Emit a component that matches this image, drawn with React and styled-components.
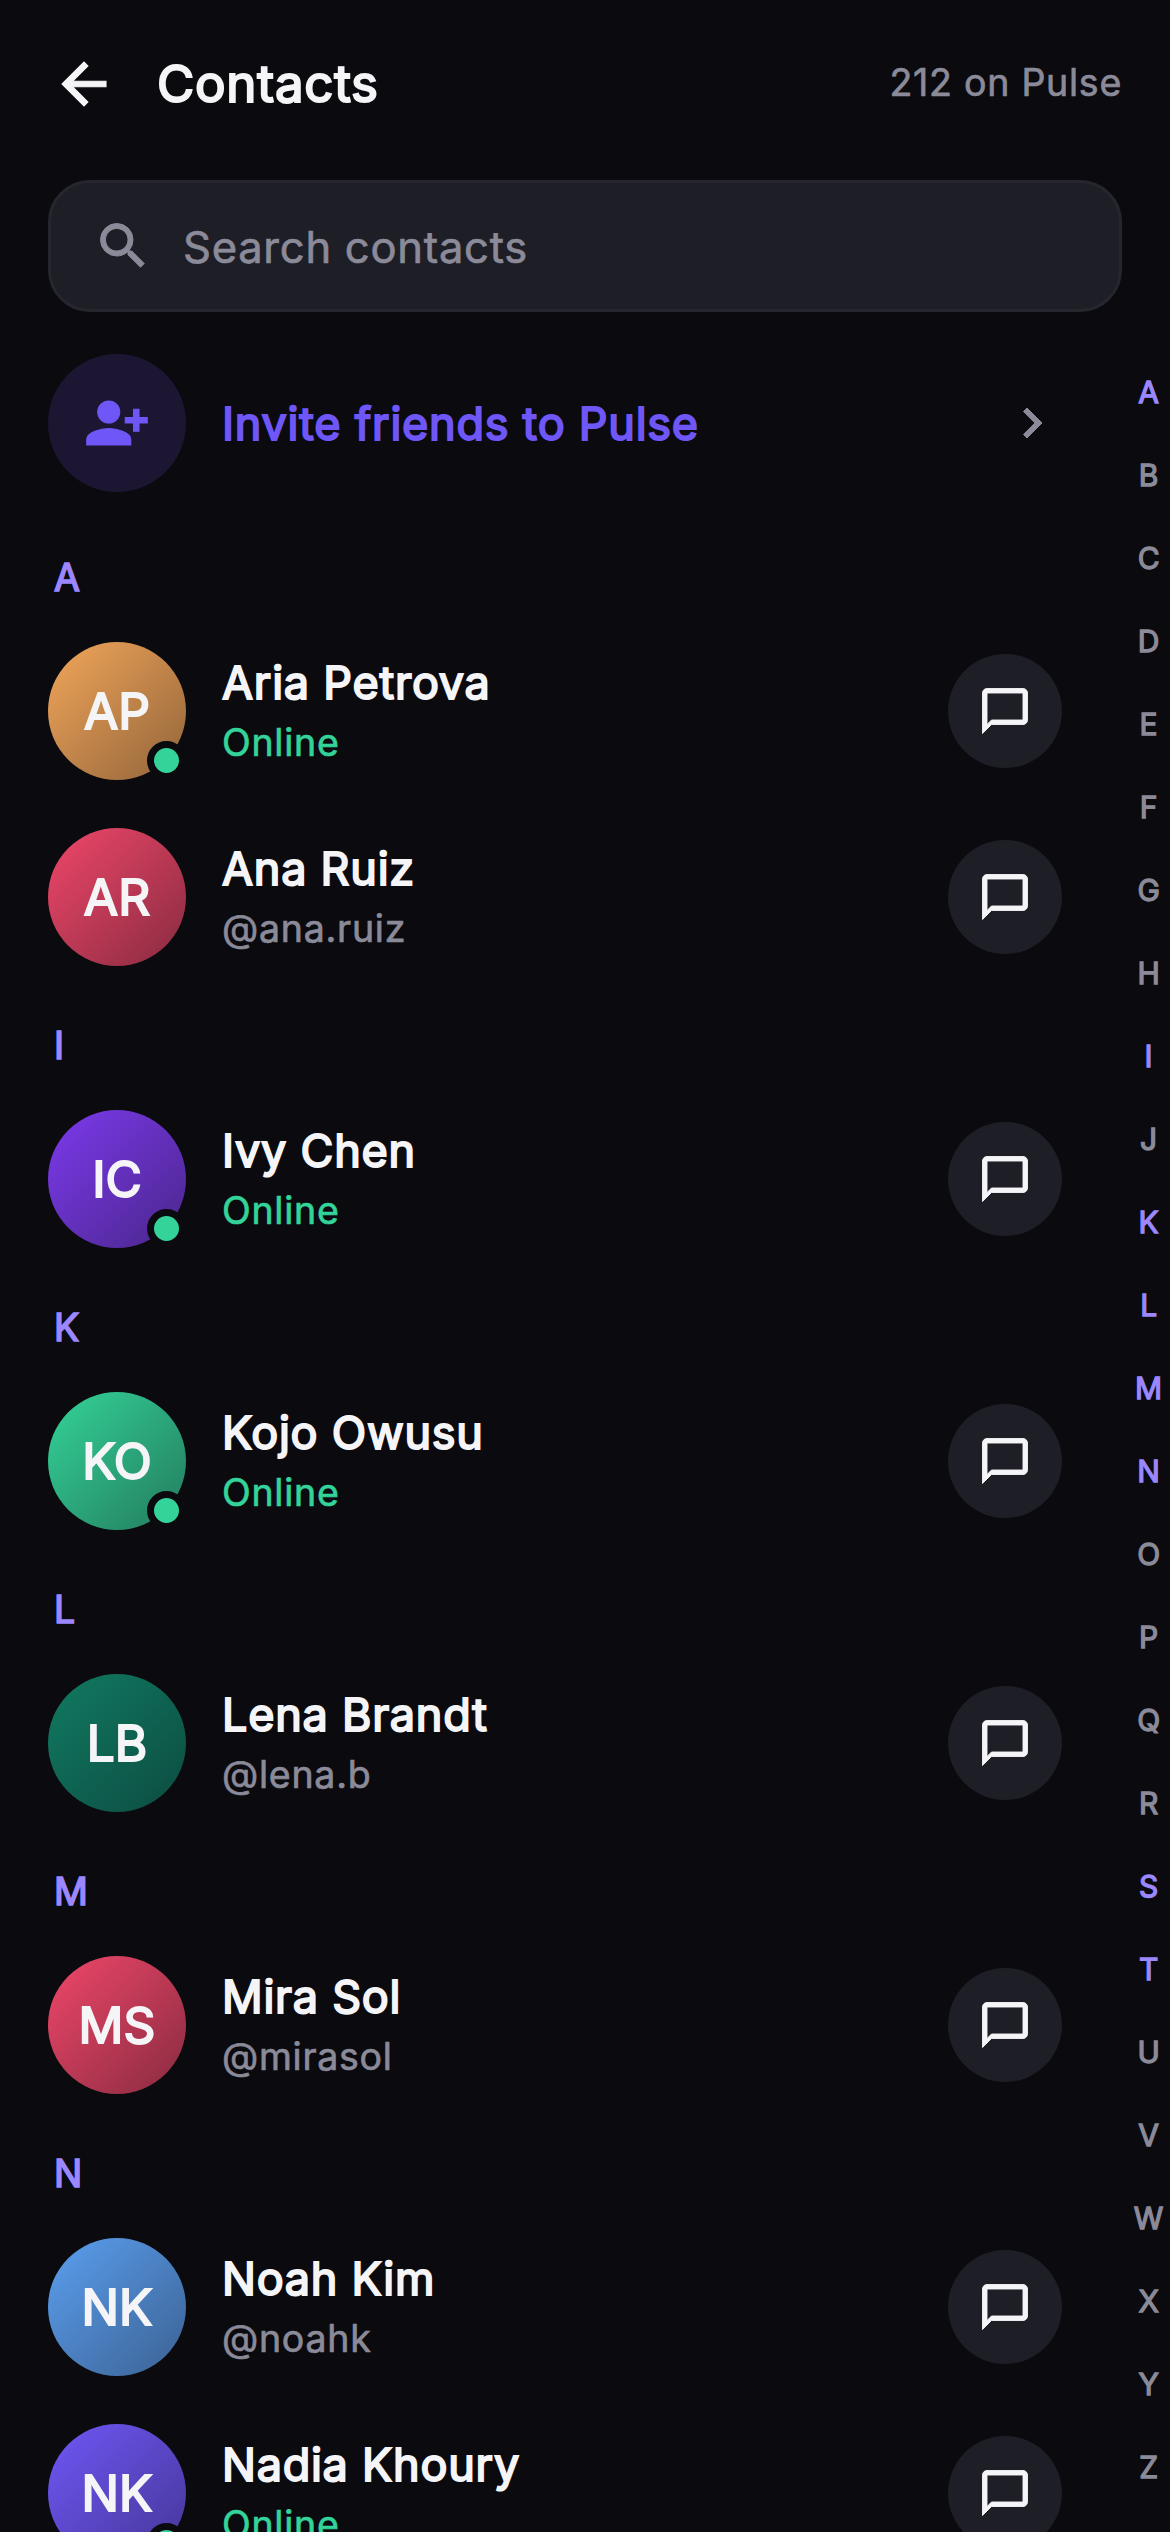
import React from 'react'
import styled, { createGlobalStyle } from 'styled-components'
import {
  MdArrowBack,
  MdChatBubbleOutline,
  MdChevronRight,
  MdPersonAddAlt1,
  MdSearch,
} from 'react-icons/md'

const GlobalStyle = createGlobalStyle`
  * { box-sizing: border-box; }
  body {
    margin: 0;
    background-color: #0a0a0f;
    font-family: Inter, "Liberation Sans", sans-serif;
    letter-spacing: 0.75px;
    color: #f5f5f8;
    overflow: hidden;
  }
  button { font: inherit; border: none; padding: 0; background: none; color: inherit; }
  svg path { stroke-width: 0.4px; }
  svg path[fill="none"] { stroke: none; }
`

const Screen = styled.main`
  display: flex;
  flex-direction: column;
  width: 1170px; height: 2532px;
  overflow: hidden;
`
const Header = styled.header`
  display: flex;
  flex: none;
  align-items: center;
  height: 168px;
  padding: 0 48px;
`
const BackButton = styled.button`
  display: flex;
  align-items: center; justify-content: center;
  width: 72px; height: 72px;
  margin-right: 37px;
  font-size: 66px;
`
const Title = styled.h1`
  flex: 1;
  margin: 0; padding-bottom: 2px;
  font-size: 51px; font-weight: 400;
  -webkit-text-stroke: 2.1px;
`
const Count = styled.span`
  padding-bottom: 3px;
  font-size: 37.5px;
  color: #8b8a99;
  -webkit-text-stroke: 0.7px;
`
const SearchBar = styled.label`
  display: flex;
  flex: none;
  align-items: center;
  height: 132px;
  margin: 12px 48px 0;
  padding: 0 42px;
  border: 3px solid #26262e;
  border-radius: 42px;
  background-color: #1e1e26;
  color: #8b8a99;
  svg { font-size: 60px; }
`
const SearchInput = styled.input`
  flex: 1;
  height: 100%;
  margin-left: 30px; padding: 2px 0 0;
  border: none; outline: none;
  background: none;
  color: #f5f5f8;
  font-family: inherit; font-size: 43.5px;
  letter-spacing: inherit;
  -webkit-text-stroke: 0.7px;
  &::placeholder { color: #8b8a99; opacity: 1; }
`
const Body = styled.div`
  display: flex;
  flex: 1;
  min-height: 0;
`
const List = styled.div`
  flex: 1;
  padding: 18px 0 0 48px;
  overflow: hidden;
`
const Row = styled.div`
  display: flex;
  align-items: center;
  height: 186px;
`
const InviteRow = styled(Row)`
  margin-bottom: 6px;
  color: #6f57f7;
  > svg {
    font-size: 60px;
    color: #8b8a99;
  }
`
const Avatar = styled.div`
  position: relative;
  display: flex;
  flex: none;
  align-items: center; justify-content: center;
  width: 138px; height: 138px;
  margin-right: 36px;
  border-radius: 50%;
  background: ${({ $from, $to }) => `linear-gradient(135deg, ${$from}, ${$to})`};
  font-size: 49.7px; font-weight: 400;
  letter-spacing: 0;
  -webkit-text-stroke: 2px;
`
const InviteIcon = styled(Avatar)`
  background: #1c1632;
  font-size: 66px;
`
const OnlineDot = styled.span`
  position: absolute;
  right: 0; bottom: 0;
  width: 39px; height: 39px;
  border: 7px solid #0a0a0f;
  border-radius: 50%;
  background-color: #34d399;
`
const Info = styled.div`
  flex: 1;
  padding-top: 3px;
`
const Name = styled.div`
  font-size: 45px; font-weight: 400;
  line-height: 59px;
  -webkit-text-stroke: 1.9px;
`
const InviteText = styled(Name)`
  margin-top: -2px;
`
const Status = styled.div`
  margin: 1px 0 -1px;
  font-size: 37.5px;
  line-height: 60px;
  color: ${({ $online }) => ($online ? '#34d399' : '#8b8a99')};
  -webkit-text-stroke: 0.7px;
`
const ChatButton = styled.button`
  display: flex;
  align-items: center; justify-content: center;
  width: 114px; height: 114px;
  border-radius: 50%;
  background-color: #1e1e26;
  font-size: 54px;
`
const SectionLetter = styled.h2`
  height: 96px;
  margin: 0; padding: 32px 0 0 6px;
  font-size: 37.5px; font-weight: 400;
  line-height: 48px;
  color: #9b87ff;
  -webkit-text-stroke: 1.6px;
`
const AlphaIndex = styled.nav`
  display: flex;
  flex: none;
  flex-direction: column;
  align-items: center;
  width: 42px;
  margin: 38px 0 24px 66px;
`
const IndexLetter = styled.span`
  display: flex;
  flex: 1;
  align-items: center;
  font-size: 30px; font-weight: 400;
  color: ${({ $active }) => ($active ? '#9b87ff' : '#8b8a99')};
  -webkit-text-stroke: 1.3px;
`

const ALPHABET = 'ABCDEFGHIJKLMNOPQRSTUVWXYZ'
const ACTIVE = 'AIKLMNST'

const SECTIONS = [
  { letter: 'A', contacts: [
    { name: 'Aria Petrova', initials: 'AP', online: true, from: '#f2a65a', to: '#91643a' },
    { name: 'Ana Ruiz', initials: 'AR', handle: '@ana.ruiz', from: '#f0476a', to: '#882b40' },
  ] },
  { letter: 'I', contacts: [
    { name: 'Ivy Chen', initials: 'IC', online: true, from: '#7c3aed', to: '#4a268b' },
  ] },
  { letter: 'K', contacts: [
    { name: 'Kojo Owusu', initials: 'KO', online: true, from: '#34d399', to: '#237b5d' },
  ] },
  { letter: 'L', contacts: [
    { name: 'Lena Brandt', initials: 'LB', handle: '@lena.b', from: '#117a61', to: '#0c4c41' },
  ] },
  { letter: 'M', contacts: [
    { name: 'Mira Sol', initials: 'MS', handle: '@mirasol', from: '#f0476a', to: '#882b40' },
  ] },
  { letter: 'N', contacts: [
    { name: 'Noah Kim', initials: 'NK', handle: '@noahk', from: '#5b9ff0', to: '#3b6192' },
    { name: 'Nadia Khoury', initials: 'NK', online: true, from: '#6f57f7', to: '#443695' },
  ] },
]

function Contact({ contact }) {
  const { name, initials, online, handle, from, to } = contact
  return (
    <Row>
      <Avatar $from={from} $to={to}>
        {initials}
        {online && <OnlineDot />}
      </Avatar>
      <Info>
        <Name>{name}</Name>
        <Status $online={online}>{online ? 'Online' : handle}</Status>
      </Info>
      <ChatButton aria-label="Message"><MdChatBubbleOutline /></ChatButton>
    </Row>
  )
}

function App() {
  return (
    <>
      <GlobalStyle />
      <Screen>
        <Header>
          <BackButton aria-label="Back"><MdArrowBack /></BackButton>
          <Title>Contacts</Title>
          <Count>212 on Pulse</Count>
        </Header>
        <SearchBar>
          <MdSearch />
          <SearchInput placeholder="Search contacts" />
        </SearchBar>
        <Body>
          <List>
            <InviteRow>
              <InviteIcon><MdPersonAddAlt1 /></InviteIcon>
              <Info><InviteText>Invite friends to Pulse</InviteText></Info>
              <MdChevronRight />
            </InviteRow>
            {SECTIONS.map(({ letter, contacts }) => (
              <section key={letter}>
                <SectionLetter>{letter}</SectionLetter>
                {contacts.map((contact) => (
                  <Contact key={contact.name} contact={contact} />
                ))}
              </section>
            ))}
          </List>
          <AlphaIndex>
            {ALPHABET.split('').map((l) => (
              <IndexLetter key={l} $active={ACTIVE.includes(l)}>{l}</IndexLetter>
            ))}
          </AlphaIndex>
        </Body>
      </Screen>
    </>
  )
}

export default App
